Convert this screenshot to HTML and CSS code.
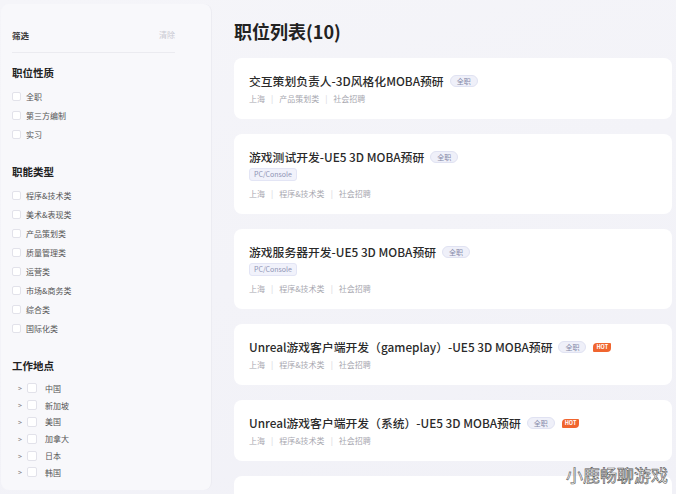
FILE: index.html
```html
<!DOCTYPE html>
<html lang="zh-CN">
<head>
    <meta charset="UTF-8">
    <meta name="viewport" content="width=device-width, initial-scale=1.0">
    <title>职位列表</title>
    <link rel="stylesheet" href="styles.css">
</head>
<body>
    <div class="sidebar">
        <div class="filter-head">
            <span class="filter-title">筛选</span>
            <span class="filter-clear">清除</span>
        </div>

        <div class="group">
            <h3>职位性质</h3>
            <label class="opt"><span class="box"></span>全职</label>
            <label class="opt"><span class="box"></span>第三方编制</label>
            <label class="opt"><span class="box"></span>实习</label>
        </div>

        <div class="group">
            <h3>职能类型</h3>
            <label class="opt"><span class="box"></span>程序&amp;技术类</label>
            <label class="opt"><span class="box"></span>美术&amp;表现类</label>
            <label class="opt"><span class="box"></span>产品策划类</label>
            <label class="opt"><span class="box"></span>质量管理类</label>
            <label class="opt"><span class="box"></span>运营类</label>
            <label class="opt"><span class="box"></span>市场&amp;商务类</label>
            <label class="opt"><span class="box"></span>综合类</label>
            <label class="opt"><span class="box"></span>国际化类</label>
        </div>

        <div class="group">
            <h3>工作地点</h3>
            <label class="opt place"><span class="arrow">&gt;</span><span class="box"></span>中国</label>
            <label class="opt place"><span class="arrow">&gt;</span><span class="box"></span>新加坡</label>
            <label class="opt place"><span class="arrow">&gt;</span><span class="box"></span>美国</label>
            <label class="opt place"><span class="arrow">&gt;</span><span class="box"></span>加拿大</label>
            <label class="opt place"><span class="arrow">&gt;</span><span class="box"></span>日本</label>
            <label class="opt place"><span class="arrow">&gt;</span><span class="box"></span>韩国</label>
        </div>
    </div>

    <div class="main">
        <h1>职位列表(10)</h1>

        <div class="job-card">
            <div class="job-title">交互策划负责人-3D风格化MOBA预研<span class="kind">全职</span></div>
            <div class="meta">上海<i>|</i>产品策划类<i>|</i>社会招聘</div>
        </div>

        <div class="job-card">
            <div class="job-title">游戏测试开发-UE5 3D MOBA预研<span class="kind">全职</span></div>
            <div class="platform">PC/Console</div>
            <div class="meta">上海<i>|</i>程序&amp;技术类<i>|</i>社会招聘</div>
        </div>

        <div class="job-card">
            <div class="job-title">游戏服务器开发-UE5 3D MOBA预研<span class="kind">全职</span></div>
            <div class="platform">PC/Console</div>
            <div class="meta">上海<i>|</i>程序&amp;技术类<i>|</i>社会招聘</div>
        </div>

        <div class="job-card">
            <div class="job-title">Unreal游戏客户端开发（gameplay）-UE5 3D MOBA预研<span class="kind">全职</span><span class="hot">HOT</span></div>
            <div class="meta">上海<i>|</i>程序&amp;技术类<i>|</i>社会招聘</div>
        </div>

        <div class="job-card">
            <div class="job-title">Unreal游戏客户端开发（系统）-UE5 3D MOBA预研<span class="kind">全职</span><span class="hot">HOT</span></div>
            <div class="meta">上海<i>|</i>程序&amp;技术类<i>|</i>社会招聘</div>
        </div>

        <div class="job-card empty"></div>
    </div>

    <div class="watermark">小鹿畅聊游戏</div>
</body>
</html>
```

FILE: styles.css
```css
body {
    font-family: "Noto Sans CJK SC", "Noto Sans", sans-serif;
    background: linear-gradient(160deg, #f5f5f9, #f1f1f7);
    display: flex;
    margin: 0;
    height: 494px;
    overflow: hidden;
    color: #333;
}
.sidebar {
    width: 211px;
    flex-shrink: 0;
    box-sizing: border-box;
    margin: 4px 0 4px 1px;
    padding: 24px 36px 0 11px;
    background: #f8f8fb;
    border-right: 1px solid #ececf2;
    border-radius: 8px;
}
.filter-head {
    display: flex;
    justify-content: space-between;
    line-height: 14px;
    padding-bottom: 10px;
    border-bottom: 1px solid #ebebf0;
}
.filter-title {
    font-size: 8.5px;
    font-weight: 700;
    color: #333;
}
.filter-clear {
    font-size: 8px;
    color: #c9c9d2;
}
.group {
    margin-bottom: 20px;
}
.group h3 {
    font-size: 10.5px;
    font-weight: 700;
    line-height: 16px;
    margin: 12px 0 6px;
    color: #222;
}
.group + .group h3 {
    margin-top: 0;
}
.opt {
    display: flex;
    align-items: center;
    height: 19px;
    font-size: 8px;
    color: #555;
}
.box {
    width: 9px;
    height: 9px;
    border: 1px solid #e2e2ea;
    border-radius: 2px;
    background: #fff;
    margin-right: 5px;
    box-sizing: border-box;
}
.place {
    height: 16.8px;
}
.place .arrow {
    width: 15px;
    padding-left: 6px;
    box-sizing: border-box;
    font-size: 7px;
    color: #777;
}
.place .box {
    width: 10px;
    height: 10px;
    margin-right: 8px;
}
.main {
    flex: 1;
    padding: 18px 4px 0 22px;
}
.main h1 {
    font-size: 18px;
    font-weight: 700;
    line-height: 26px;
    margin: 0 0 14px;
    color: #222;
}
.job-card {
    background: #fff;
    border-radius: 8px;
    padding: 13px 15px 13px;
    margin-bottom: 15px;
}
.job-card.empty {
    height: 40px;
}
.job-title {
    font-size: 11.8px;
    font-weight: 500;
    line-height: 20px;
    color: #2a2a2a;
    display: flex;
    align-items: center;
}
.kind {
    font-size: 7px;
    font-weight: 400;
    color: #8589a8;
    background: #eff0f9;
    border: 1px solid #e0e2f2;
    border-radius: 7px;
    line-height: 10px;
    padding: 0 6px;
    margin-left: 6px;
}
.hot {
    font-size: 5.5px;
    font-weight: 700;
    color: #fff;
    background: #f0652f;
    line-height: 9px;
    padding: 0 3px;
    margin-left: 7px;
    border-radius: 4px 1px 4px 1px;
}
.platform {
    width: fit-content;
    font-size: 7px;
    color: #8e92b3;
    background: #f1f2fb;
    border: 1px solid #e3e5f5;
    border-radius: 3px;
    line-height: 11px;
    padding: 0 4px;
    margin: 1px 0 6px;
}
.meta {
    font-size: 8px;
    line-height: 14px;
    color: #a8a8b0;
    margin-top: 1px;
}
.meta i {
    font-style: normal;
    color: #d4d4da;
    margin: 0 6px;
}
.watermark {
    position: absolute;
    right: 8px;
    bottom: 9px;
    font-size: 17px;
    line-height: 20px;
    color: #fff;
    -webkit-text-stroke: 0.6px #555;
}
```
